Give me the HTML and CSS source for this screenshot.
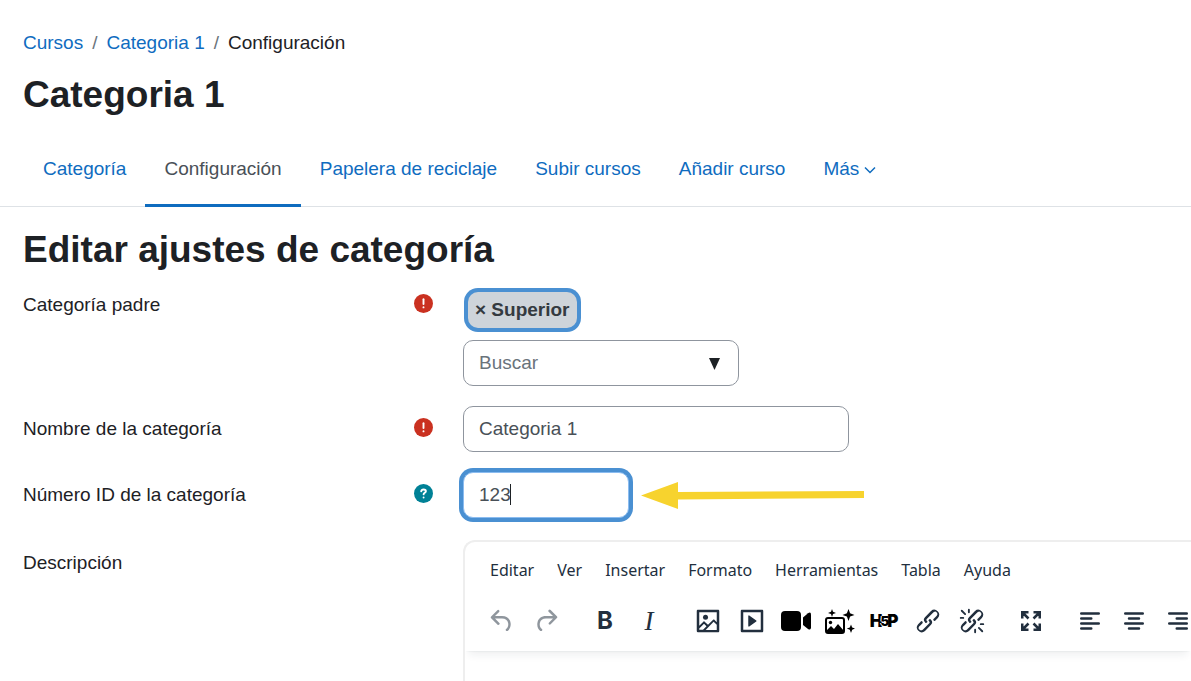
FILE: index.html
```html
<!DOCTYPE html>
<html lang="es">
<head>
<meta charset="UTF-8">
<meta name="viewport" content="width=device-width, initial-scale=1">
<title>Categoria 1: Configuración</title>
<link rel="stylesheet" href="styles.css">
</head>
<body>
<header class="page-header">
  <nav class="breadcrumb" aria-label="Ruta">
    <a href="#">Cursos</a>
    <span class="sep">/</span>
    <a href="#">Categoria 1</a>
    <span class="sep">/</span>
    <span>Configuración</span>
  </nav>
  <h1>Categoria 1</h1>
</header>

<nav class="tabs">
  <a href="#">Categoría</a>
  <a href="#" class="active">Configuración</a>
  <a href="#">Papelera de reciclaje</a>
  <a href="#">Subir cursos</a>
  <a href="#">Añadir curso</a>
  <a href="#">Más<svg class="chevron" width="12" height="8" viewBox="0 0 12 8"><path d="M1 1.500 6 6.500l5-5"/></svg></a>
</nav>

<main class="content">
  <h2>Editar ajustes de categoría</h2>
  <form class="form">
    <div class="row">
      <div class="row-label">
        <label for="parent">Categoría padre</label>
        <svg class="mark required" viewBox="0 0 20 20"><circle cx="10" cy="10" r="10"/><path d="M10 5.500v5"/><path d="M10 14v.1"/></svg>
      </div>
      <div class="row-field">
        <div class="badge-line"><span class="badge">× Superior</span></div>
        <div class="combo">
          <input type="text" id="parent" placeholder="Buscar">
          <svg class="combo-arrow" width="11" height="12" viewBox="0 0 11 12"><path d="M0 0h11L5.500 12z"/></svg>
        </div>
      </div>
    </div>

    <div class="row">
      <div class="row-label">
        <label for="name">Nombre de la categoría</label>
        <svg class="mark required" viewBox="0 0 20 20"><circle cx="10" cy="10" r="10"/><path d="M10 5.500v5"/><path d="M10 14v.1"/></svg>
      </div>
      <div class="row-field">
        <input type="text" id="name" class="input-name" value="Categoria 1">
      </div>
    </div>

    <div class="row">
      <div class="row-label">
        <label for="idnumber">Número ID de la categoría</label>
        <svg class="mark help" viewBox="0 0 20 20"><circle cx="10" cy="10" r="10"/><path d="M7.600 7.800c.2-1.500 1.200-2 2.500-2 1.400 0 2.400.7 2.400 1.900 0 1.600-2.300 1.500-2.400 3.200"/><path d="M10.100 14.100v.1"/></svg>
      </div>
      <div class="row-field id-field">
        <div class="id-box">
          <input type="text" id="idnumber" class="input-id" value="123">
          <span class="caret"></span>
        </div>
        <svg class="pointer" width="224" height="28" viewBox="0 0 224 28"><path d="M0 14.500 37 1v10l186-1v7L37 18.500V28z"/></svg>
      </div>
    </div>

    <div class="row row-editor">
      <div class="row-label">
        <span>Descripción</span>
      </div>
      <div class="editor">
        <div class="editor-head">
          <div class="menubar">
            <button type="button">Editar</button>
            <button type="button">Ver</button>
            <button type="button">Insertar</button>
            <button type="button">Formato</button>
            <button type="button">Herramientas</button>
            <button type="button">Tabla</button>
            <button type="button">Ayuda</button>
          </div>
          <div class="toolbar">
            <div class="group">
              <button type="button" aria-label="Deshacer" disabled><svg viewBox="0 0 24 24"><path d="M6.4 8H12c3.7 0 6.2 2 6.8 5.1.6 2.7-.4 5.6-2.3 6.8a1 1 0 0 1-1-1.8c1.1-.6 1.800-2.700 1.400-4.600-.5-2.100-2.100-3.500-4.900-3.500H6.400l3.300 3.300a1 1 0 1 1-1.400 1.400l-5-5a1 1 0 0 1 0-1.400l5-5a1 1 0 0 1 1.400 1.400L6.400 8Z"/></svg></button>
              <button type="button" aria-label="Rehacer" disabled><svg viewBox="0 0 24 24"><path d="M17.600 10H12c-2.800 0-4.400 1.400-4.900 3.500-.4 2 .3 4 1.400 4.600a1 1 0 1 1-1 1.800c-2-1.200-2.900-4.100-2.300-6.800.6-3 3-5.100 6.800-5.100h5.600l-3.300-3.300a1 1 0 1 1 1.400-1.400l5 5a1 1 0 0 1 0 1.400l-5 5a1 1 0 0 1-1.400-1.400l3.300-3.300Z"/></svg></button>
            </div>
            <div class="group">
              <button type="button" class="bold" aria-label="Negrita">B</button>
              <button type="button" class="italic" aria-label="Cursiva">I</button>
            </div>
            <div class="group">
              <button type="button" aria-label="Imagen"><svg viewBox="0 0 24 24"><path fill-rule="evenodd" d="m5 15.700 3.300-3.200c.3-.3.7-.3 1 0L12 15l4.100-4c.3-.4.8-.4 1 0l1.900 1.900V5H5v10.700ZM5 18v1h3l2.800-2.900-2-2L5 17.900Zm14-3-2.500-2.400-6.400 6.500H19v-4ZM4 3h16c.6 0 1 .4 1 1v16c0 .6-.4 1-1 1H4a1 1 0 0 1-1-1V4c0-.6.4-1 1-1Z"/><circle cx="10" cy="9" r="2"/></svg></button>
              <button type="button" aria-label="Multimedia"><svg viewBox="0 0 24 24"><path fill-rule="evenodd" d="M4 3h16c.6 0 1 .4 1 1v16c0 .6-.4 1-1 1H4a1 1 0 0 1-1-1V4c0-.6.4-1 1-1Zm1 2v14h14V5H5Zm4.800 2.600 5.600 4a.5.5 0 0 1 0 .8l-5.600 4A.5.5 0 0 1 9 16V8a.5.5 0 0 1 .8-.4Z"/></svg></button>
              <button type="button" class="black" aria-label="Grabar video"><svg viewBox="0 0 30 30"><rect y="5" width="20" height="20" rx="4"/><path d="M22 11.500 27 7.200Q30 5.500 30 8.500v13q0 3-3 1.500L22 19z"/></svg></button>
              <button type="button" class="black" aria-label="Generar imagen"><svg viewBox="0 0 30 30"><rect class="line" x="1" y="12" width="18" height="15" rx="2"/><path d="M1 27v-2l5-5 3 3 4-5 6 7v2z"/><circle cx="5.500" cy="16.500" r="1.700"/><path d="m7 3 1 2.800L11 7l-3 1-1 3-1-3-3-1 3-1.200zM23.500 3l1.600 4.300 4.400 1.700-4.400 1.600-1.600 4.400-1.600-4.400L17.500 9l4.400-1.700zM26 18.500l1.200 3 3 1-3 1.200L26 27l-1.200-3.300-3-1.200 3-1z"/></svg></button>
              <button type="button" class="h5p" aria-label="Insertar H5P">H<small>5</small>P</button>
              <button type="button" aria-label="Enlace"><svg viewBox="0 0 24 24"><path d="M6.200 12.300a1 1 0 0 1 1.400 1.400l-2 2a2 2 0 1 0 2.600 2.800l4.800-4.800a1 1 0 0 0 0-1.400 1 1 0 1 1 1.400-1.300 2.900 2.900 0 0 1 0 4L9.600 20a3.900 3.900 0 0 1-5.500-5.500l2-2Zm11.600-.6a1 1 0 0 1-1.400-1.400l2-2a2 2 0 1 0-2.600-2.800L11 10.300a1 1 0 0 0 0 1.400A1 1 0 1 1 9.600 13a2.900 2.900 0 0 1 0-4L14.400 4a3.900 3.900 0 0 1 5.500 5.500l-2 2Z"/></svg></button>
              <button type="button" aria-label="Quitar enlace"><svg viewBox="0 0 24 24"><path d="M6.200 12.300a1 1 0 0 1 1.400 1.400l-2 2a2 2 0 1 0 2.600 2.800l4.800-4.800a1 1 0 0 0 0-1.400 1 1 0 1 1 1.400-1.300 2.900 2.900 0 0 1 0 4L9.600 20a3.900 3.900 0 0 1-5.500-5.500l2-2Zm11.600-.6a1 1 0 0 1-1.400-1.400l2-2a2 2 0 1 0-2.600-2.800L11 10.300a1 1 0 0 0 0 1.400A1 1 0 1 1 9.600 13a2.900 2.900 0 0 1 0-4L14.400 4a3.900 3.900 0 0 1 5.500 5.500l-2 2Z"/><path class="ray" d="M3.800 3.800 6.500 6.500M9.500 3v2M3 9.500h2M20.200 20.200 17.500 17.500M14.500 21v-2M21 14.500h-2"/></svg></button>
            </div>
            <div class="group">
              <button type="button" aria-label="Pantalla completa"><svg viewBox="0 0 24 24"><path class="thick" d="M5 10V5h5M5 5l5 5M14 5h5v5M19 5l-5 5M5 14v5h5M5 19l5-5M14 19h5v-5M19 19l-5-5"/></svg></button>
            </div>
            <div class="group">
              <button type="button" aria-label="Alinear a la izquierda"><svg viewBox="0 0 24 24"><path class="bars" d="M5 6h14M5 10h8M5 14h14M5 18h8"/></svg></button>
              <button type="button" aria-label="Centrar"><svg viewBox="0 0 24 24"><path class="bars" d="M5 6h14M8 10h8M5 14h14M8 18h8"/></svg></button>
              <button type="button" aria-label="Alinear a la derecha"><svg viewBox="0 0 24 24"><path class="bars" d="M5 6h14M11 10h8M5 14h14M11 18h8"/></svg></button>
            </div>
          </div>
        </div>
      </div>
    </div>
  </form>
</main>
</body>
</html>
```
FILE: styles.css
```css
* { box-sizing: border-box; }
body { margin: 0; min-height: 100vh; display: flex; flex-direction: column; overflow-x: hidden; font-family: "Liberation Sans", Arial, sans-serif; font-size: 19px; line-height: 28px; color: #1d2125; background: #fff; }
a { color: #0f6cbf; text-decoration: none; }
button, input { font: inherit; color: inherit; }
button { border: 0; padding: 0; background: none; }
h1, h2 { margin: 0; font-size: 37px; line-height: 46px; }

.page-header { padding: 29px 23px 12px; }
.breadcrumb { display: flex; gap: 9px; margin-bottom: 15px; }
.sep { color: #6a737b; }

.tabs { display: flex; padding: 0 24px; box-shadow: inset 0 -1px #dee2e6; }
.tabs a { padding: 0 19px; line-height: 77px; }
.tabs .active { color: #495057; box-shadow: inset 0 -3px #0f6cbf; }
.chevron { margin-left: 5px; vertical-align: 1px; fill: none; stroke: #0f6cbf; stroke-width: 1.5; }

.content { flex: 1; display: flex; flex-direction: column; padding: 20px 0 0 23px; }
h2 { margin-bottom: 9px; }
.form { flex: 1; display: flex; flex-direction: column; gap: 20px; }
.row { display: flex; gap: 30px; }
.row-label { flex: 0 0 410px; display: flex; justify-content: space-between; align-items: flex-start; padding-top: 9px; }
.mark { width: 19px; height: 19px; margin-top: 3px; stroke: #fff; stroke-width: 2; stroke-linecap: round; fill: none; }
.mark circle { stroke: none; }
.required circle { fill: #ca3120; }
.help circle { fill: #008196; }

.row-field input { display: block; height: 46px; padding: 0 15px; border: 1px solid #8f959e; border-radius: 10px; background: #fff; color: #495057; }
.row-field input::placeholder { color: #6a737b; opacity: 1; }
.badge-line { display: flex; padding: 10px 5px 12px; }
.badge { padding: 0 7px; border-radius: 10px; background: #ced4da; box-shadow: 0 0 0 4px #4a90d2; color: #343a40; font-weight: bold; line-height: 36px; }
.combo { position: relative; width: 276px; }
.combo input { width: 100%; }
.combo-arrow { position: absolute; top: 18px; right: 19px; fill: #1d2125; }
.input-name { width: 386px; }
.id-field { display: flex; align-items: center; gap: 12px; }
.id-box { position: relative; }
.row-field .input-id { width: 166px; border-color: #8bbcf0; box-shadow: 0 0 0 4px #4a90d2; }
.caret { position: absolute; left: 47px; top: 12px; width: 1px; height: 21px; background: #1d2125; }
.pointer { fill: #f7d32e; }

/* text editor */
.row-editor { flex: 1; padding-top: 2px; }
.editor { flex: 1; min-width: 0; overflow: hidden; border: 2px solid #eee; border-width: 2px 0 0 2px; border-radius: 12px 0 0 0; }
.editor-head { padding: 8px 12px; box-shadow: 0 2px 2px -2px rgba(34,47,62,.1), 0 8px 8px -4px rgba(34,47,62,.07); color: #222f3e; }
.menubar { display: flex; gap: 23px; padding: 6px 13px 15px; font-family: "Noto Sans", sans-serif; font-size: 16px; }
.toolbar { display: flex; gap: 15px; padding-left: 3px; }
.group { display: flex; }
.toolbar button { flex: none; display: flex; align-items: center; justify-content: center; width: 44px; height: 44px; }
.toolbar svg { width: 30px; height: 30px; fill: #222f3e; }
.toolbar button:disabled { opacity: .5; }
.toolbar .black svg { fill: #000; }
.toolbar .line { fill: none; stroke: #000; stroke-width: 2; }
.toolbar .ray { fill: none; stroke: #222f3e; stroke-width: 1.5; stroke-linecap: round; }
.toolbar .thick { fill: none; stroke: #222f3e; stroke-width: 2; }
.toolbar .bars { stroke: #222f3e; stroke-width: 2; stroke-linecap: round; }
.bold { font-family: Inter, sans-serif; font-size: 24px; font-weight: bold; }
.italic { font-family: "Liberation Serif", serif; font-size: 27px; font-style: italic; }
.h5p { color: #000; font-family: Inter, sans-serif; font-size: 17px; font-weight: 900; }
.h5p small { margin: 0 -2px; font-size: 13px; text-shadow: 1px 0 #fff, -1px 0 #fff; }
```
